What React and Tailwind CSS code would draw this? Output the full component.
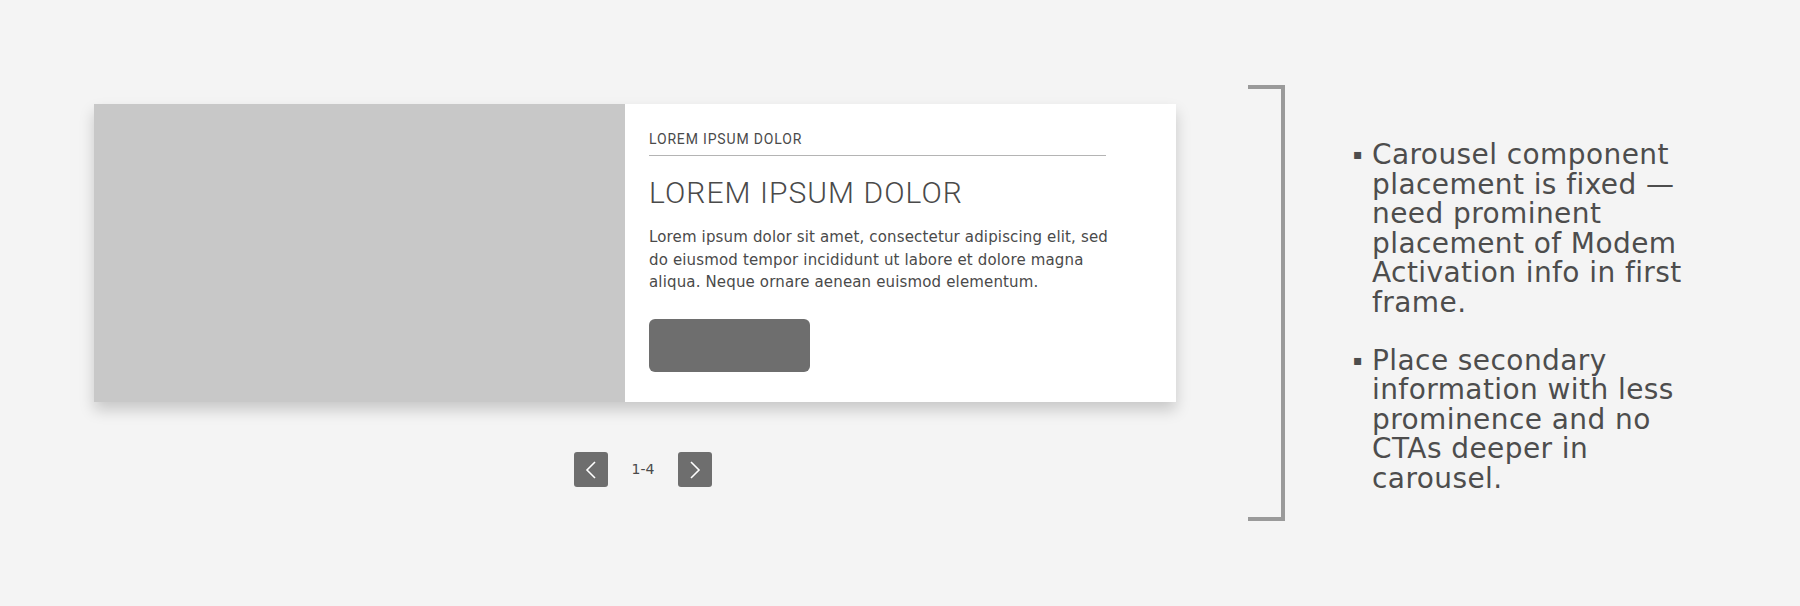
import React from 'react';

const Chevron = ({ dir }) => (
    <svg width="12" height="20" viewBox="0 0 12 20" fill="none">
        {dir === 'left'
            ? <path d="M10 2 L2 10 L10 18" stroke="#ffffff" strokeWidth="1.6" strokeLinejoin="miter" />
            : <path d="M2 2 L10 10 L2 18" stroke="#ffffff" strokeWidth="1.6" strokeLinejoin="miter" />}
    </svg>
);

const notes = [
    'Carousel component placement is fixed — need prominent placement of Modem Activation info in first frame.',
    'Place secondary information with less prominence and no CTAs deeper in carousel.',
];

export default function App() {
    return (
        <div className="w-[1800px] h-[606px] bg-[#f4f4f4] flex pt-[85px] pl-[94px] text-[#4a4a4a]" style={{ fontFamily: '"DejaVu Sans", sans-serif' }}>
            {/* carousel */}
            <div className="w-[1082px] pt-[19px]">
                <div className="flex h-[298px] shadow-[0_8px_14px_rgba(0,0,0,0.18)]">
                    <div className="w-[531px] bg-[#c8c8c8]" />
                    <div className="flex-1 bg-white pl-[24px] pt-[26px]">
                        <p className="text-[14px] tracking-[0.06em] leading-[18px] font-['Roboto'] text-[#4a4a4a]">LOREM IPSUM DOLOR</p>
                        <div className="w-[457px] h-px bg-[#b4b4b4] mt-[7px]" />
                        <h2 className="mt-[18px] text-[30px] font-light tracking-[0.035em] leading-[38px] font-['Roboto'] text-[#4a4a4a]">LOREM IPSUM DOLOR</h2>
                        <p className="mt-[14px] w-[472px] text-[15px] leading-[22.5px] tracking-[0.01em] text-[#4a4a4a]">
                            Lorem ipsum dolor sit amet, consectetur adipiscing elit, sed do eiusmod tempor incididunt ut labore et dolore magna aliqua. Neque ornare aenean euismod elementum.
                        </p>
                        <div className="mt-[25px] w-[161px] h-[53px] rounded-[6px] bg-[#6e6e6e]" />
                    </div>
                </div>
                <div className="flex items-center mt-[50px] pl-[480px]">
                    <button className="w-[34px] h-[35px] rounded-[3px] bg-[#6e6e6e] flex items-center justify-center">
                        <Chevron dir="left" />
                    </button>
                    <span className="w-[70px] text-center text-[14px] text-[#4a4a4a]">1-4</span>
                    <button className="w-[34px] h-[35px] rounded-[3px] bg-[#6e6e6e] flex items-center justify-center">
                        <Chevron dir="right" />
                    </button>
                </div>
            </div>

            {/* bracket */}
            <div className="ml-[72px] w-[37px] h-[436px] border-t-[4px] border-r-[4px] border-b-[4px] border-[#9a9a9a]" />

            {/* notes */}
            <ul className="ml-[68px] pt-[55px] w-[360px] flex flex-col gap-[28px]">
                {notes.map(n => (
                    <li key={n} className="flex text-[28px] leading-[29.6px] tracking-[0.015em] text-[#4d4d4d]">
                        <span className="w-[19px] flex-shrink-0 text-[14px] leading-[29.6px]">▪</span>
                        <span className="w-[322px]">{n}</span>
                    </li>
                ))}
            </ul>
        </div>
    );
}
